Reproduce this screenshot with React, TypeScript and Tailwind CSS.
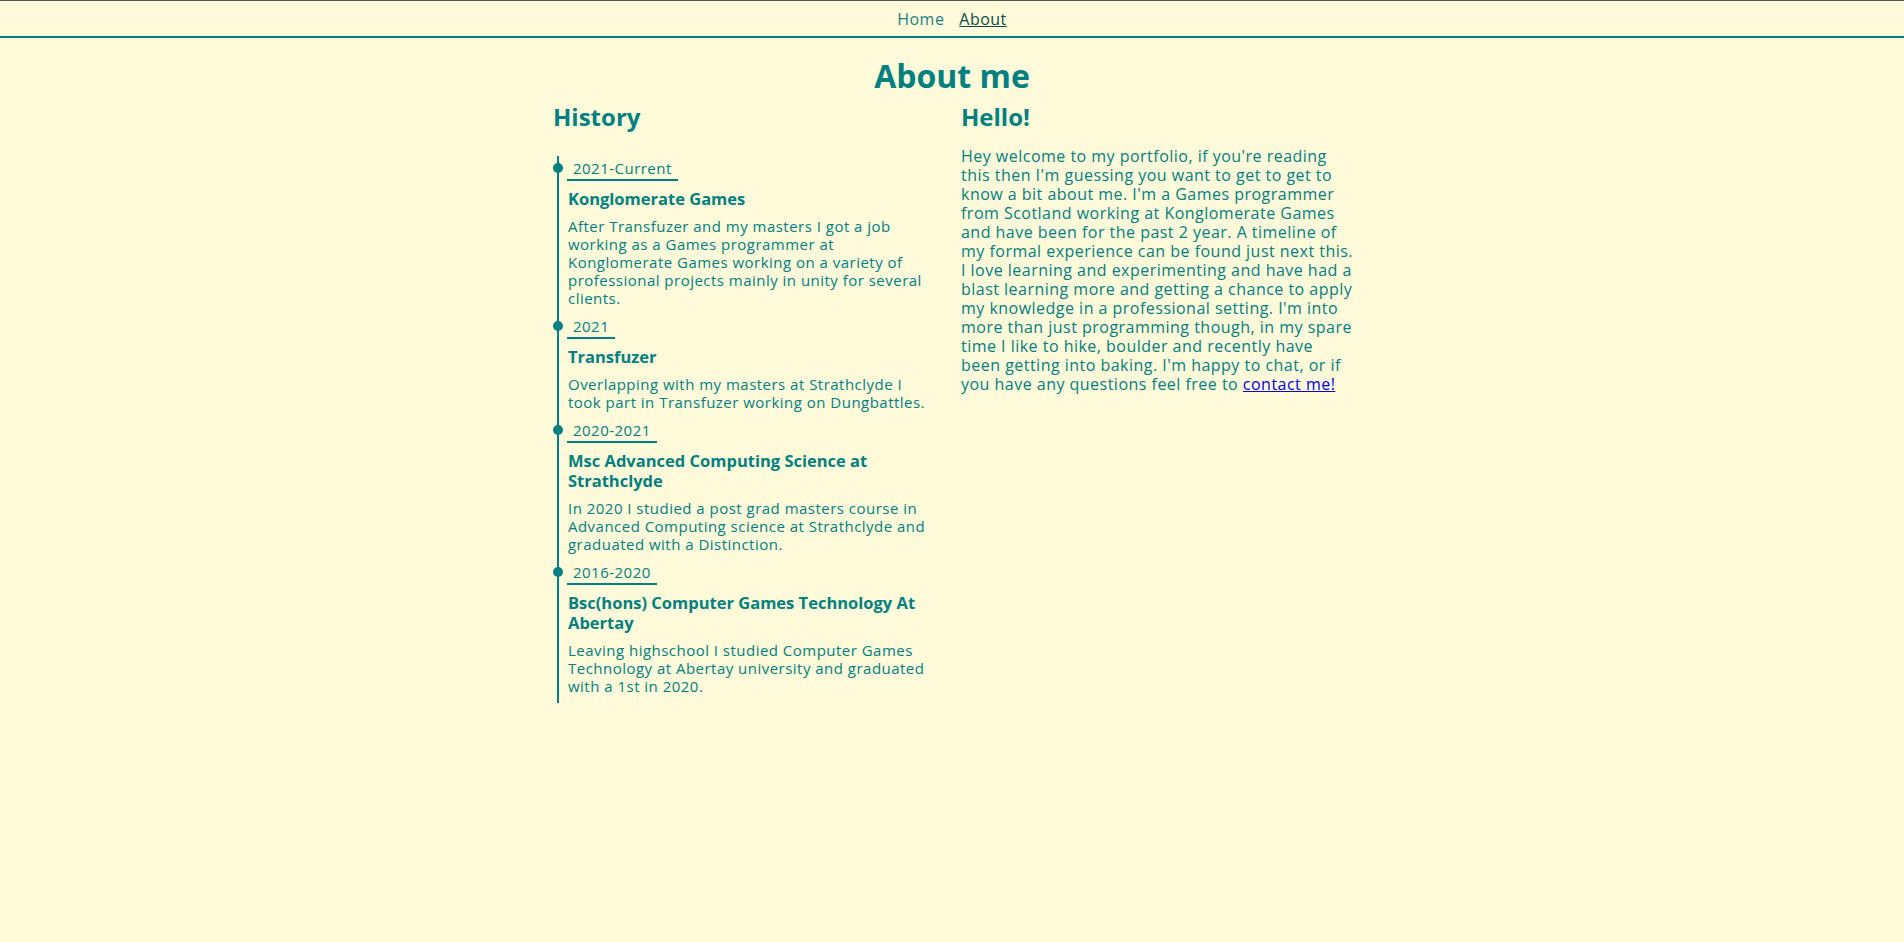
import React, {FC} from 'react';

interface HistoryItem {
    date: string,
    title: string,
    text: string,
}

const history: HistoryItem[] = [
    {
        date: "2021-Current",
        title: "Konglomerate Games",
        text: "After Transfuzer and my masters I got a job working as a Games programmer at Konglomerate Games working on a variety of professional projects mainly in unity for several clients.",
    },
    {
        date: "2021",
        title: "Transfuzer",
        text: "Overlapping with my masters at Strathclyde I took part in Transfuzer working on Dungbattles.",
    },
    {
        date: "2020-2021",
        title: "Msc Advanced Computing Science at Strathclyde",
        text: "In 2020 I studied a post grad masters course in Advanced Computing science at Strathclyde and graduated with a Distinction.",
    },
    {
        date: "2016-2020",
        title: "Bsc(hons) Computer Games Technology At Abertay",
        text: "Leaving highschool I studied Computer Games Technology at Abertay university and graduated with a 1st in 2020.",
    },
];

const TimelineEntry: FC<{ item: HistoryItem }> = ({item}) => {
    return (
        <div className="relative">
            <span className="absolute left-[-14px] top-[4px] w-[10px] h-[10px] rounded-full bg-[#008080]"/>
            <div className="w-fit px-[6px] pb-[2px] border-b-2 border-[#008080] text-[15px] leading-[18px]">
                {item.date}
            </div>
            <h3 className="mt-[8px] text-[16.5px] leading-[20px] font-bold tracking-normal pl-[1px]">{item.title}</h3>
            <p className="mt-[8px] text-[15px] leading-[18px] pl-[1px]">{item.text}</p>
        </div>
    );
};

const App: FC = () => {
    return (
        <div
            className="min-h-screen bg-[#fffad9] text-[#008080] tracking-[0.03em]"
            style={{fontFamily: '"Open Sans", "Noto Sans", sans-serif'}}
        >
            <nav
                className="
                    flex
                    justify-center
                    items-center
                    gap-[15px]
                    h-[38px]
                    border-t
                    border-[#555555]
                    border-b-2
                    border-b-[#008080]
                    text-[16px]
                "
            >
                <a href="#" className="text-[#1a7f86]">Home</a>
                <a href="#" className="text-[#0d4a4a] underline">About</a>
            </nav>
            <main className="flex flex-col items-center">
                <h1 className="mt-[19px] text-[32px] leading-[38px] font-bold tracking-normal">About me</h1>
                <div className="flex mt-[8px] pl-[4px]">
                    <div className="w-[408px] flex flex-col">
                        <h2 className="text-[24px] leading-[28px] font-bold tracking-normal">History</h2>
                        <div className="mt-[25px] ml-[4px] w-[370px] border-l-2 border-[#008080] pl-[8px] pt-[3px] pb-[8px] flex flex-col gap-[10px]">
                            {history.map((item) => (
                                <TimelineEntry key={item.date} item={item}/>
                            ))}
                        </div>
                    </div>
                    <div className="w-[394px] flex flex-col">
                        <h2 className="text-[24px] leading-[28px] font-bold tracking-normal">Hello!</h2>
                        <p className="mt-[16px] text-[16px] leading-[19px]">
                            Hey welcome to my portfolio, if you're reading this then I'm guessing you want to get to
                            get to know a bit about me. I'm a Games programmer from Scotland working at Konglomerate
                            Games and have been for the past 2 year. A timeline of my formal experience can be found
                            just next this. I love learning and experimenting and have had a blast learning more and
                            getting a chance to apply my knowledge in a professional setting. I'm into more than just
                            programming though, in my spare time I like to hike, boulder and recently have been getting
                            into baking. I'm happy to chat, or if you have any questions feel free to{' '}
                            <a href="#" className="text-[#0000ee] underline">contact me!</a>
                        </p>
                    </div>
                </div>
            </main>
        </div>
    );
};

export default App;
